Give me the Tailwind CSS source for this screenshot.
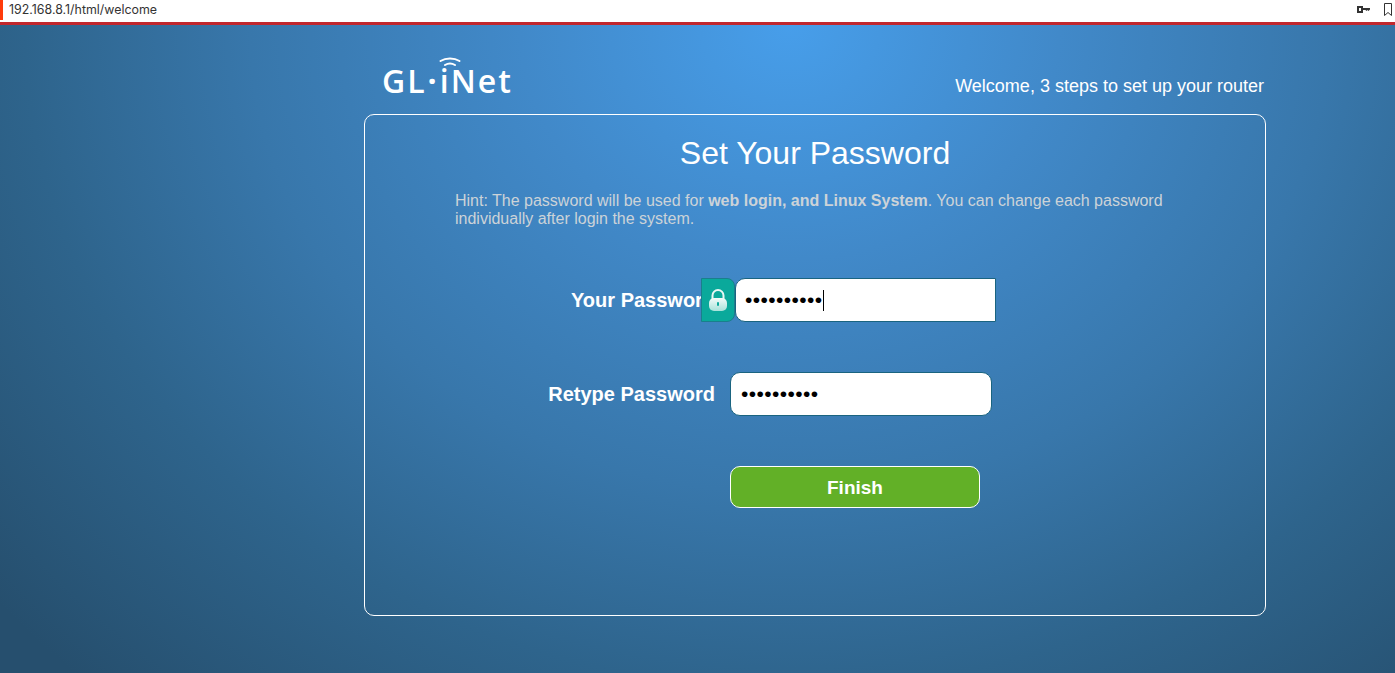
<!DOCTYPE html>
<html lang="en">
<head>
    <meta charset="UTF-8">
    <meta name="viewport" content="width=device-width, initial-scale=1.0">
    <title>GL.iNet Welcome</title>
    <script src="https://cdn.jsdelivr.net/npm/@tailwindcss/browser@4"></script>
</head>
<body class="h-[673px] overflow-hidden bg-white font-['Liberation_Sans',Arial,sans-serif]">
    <!-- Browser address bar -->
    <div class="h-[22px] flex items-center justify-between bg-white">
        <div class="flex items-center h-full">
            <div class="w-[3px] h-[20px] mb-[2px] bg-[#ff3b0a]"></div>
            <span class="ml-[6px] mb-[2px] text-[12.400px] text-[#333] font-['Inter',sans-serif]">192.168.8.1/html/welcome</span>
        </div>
        <div class="flex items-center gap-[14px] pr-[3px] mb-[3px]">
            <svg width="13" height="7" viewBox="0 0 13 7" fill="#333"><path d="M0 0h6v2h7v1.500l-1.500 1.500-1-1-1 1-1-1H6v3H0zM2 2v3h2V2z" fill-rule="evenodd"/></svg>
            <svg width="8" height="13" viewBox="0 0 8 13" fill="none" stroke="#333" stroke-width="1"><path d="M.5.500h7v12L4 9.500l-3.500 3z"/></svg>
        </div>
    </div>
    <div class="h-[3px] bg-[#c1272d]"></div>

    <main class="h-[648px] bg-[radial-gradient(ellipse_900px_780px_at_790px_0px,#479eea_0%,#4189c9_30%,#3877ab_60%,#2e648c_85%,#264f6e_115%)] pl-[364px]">
        <!-- Logo row -->
        <div class="w-[902px] h-[89px] flex justify-between">
            <div class="relative ml-[18px] mt-[39px] h-[34px] text-[32px] leading-[34px] font-semibold tracking-[2px] text-white font-['Open_Sans',sans-serif] whitespace-nowrap">
                GL<span class="mx-[1px] font-bold">·</span>iNet
                <svg class="absolute left-[57px] -top-[7px]" width="22" height="13" viewBox="0 0 22 13" fill="none" stroke="white" stroke-width="2" stroke-linecap="round">
                    <path d="M1.500 4C7 .5 15 .5 20.500 4"/>
                    <path d="M6 8C9 6.200 13 6.200 16 8"/>
                </svg>
            </div>
            <p class="mt-[50px] mr-[2px] text-[18px] leading-[22px] text-white">Welcome, 3 steps to set up your router</p>
        </div>

        <!-- Card -->
        <section class="w-[902px] h-[502px] border border-white rounded-[10px]">
            <h1 class="mt-[18px] text-center text-[32px] leading-[40px] text-white">Set Your Password</h1>
            <p class="mt-[19px] ml-[90px] w-[730px] text-[16px] leading-[18px] text-[#ccd3d8]">Hint: The password will be used for <b>web login, and Linux System</b>. You can change each password individually after login the system.</p>

            <div class="mt-[50px] flex items-stretch h-[44px]">
                <label class="w-[336px] pl-[206px] overflow-hidden whitespace-nowrap text-[20px] font-bold leading-[44px] text-white">Your Password</label>
                <div class="w-[34px] flex items-center justify-center bg-[#0aa99b] border border-[#1a7f8c] rounded-r-[8px]">
                    <svg width="20" height="24" viewBox="0 0 20 24">
                        <defs>
                            <linearGradient id="lockBody" x1="0" y1="0" x2="0" y2="1">
                                <stop offset="0" stop-color="#f2fbf9"/>
                                <stop offset="1" stop-color="#a8e2da"/>
                            </linearGradient>
                        </defs>
                        <path d="M4.500 11V7.500a5.500 5.500 0 0 1 11 0V11" fill="none" stroke="#e8f7f4" stroke-width="2"/>
                        <rect x="1" y="10" width="18" height="13" rx="5" fill="url(#lockBody)"/>
                        <rect x="9" y="14" width="2" height="4" rx="1" fill="#0aa99b"/>
                    </svg>
                </div>
                <div class="relative w-[261px] bg-white border border-[#1a6480] rounded-l-[10px]">
                    <input type="password" value="1234567890" class="w-full h-full pl-[9px] text-[21px] tracking-[0.400px] text-black outline-none bg-transparent">
                    <div class="absolute left-[87px] top-[11px] w-px h-[21px] bg-black"></div>
                </div>
            </div>

            <div class="mt-[50px] flex items-center h-[44px]">
                <label class="w-[350px] text-right whitespace-nowrap text-[20px] font-bold text-white">Retype Password</label>
                <input type="password" value="1234567890" class="ml-[15px] w-[262px] h-[44px] pl-[10px] text-[21px] tracking-[0.400px] text-black bg-white border border-[#1a6480] rounded-[10px] outline-none">
            </div>

            <div class="mt-[50px] pl-[365px]">
                <button class="w-[250px] h-[42px] pt-[2px] bg-[#62b027] border border-white rounded-[10px] text-[19px] font-bold text-white">Finish</button>
            </div>
        </section>
    </main>
</body>
</html>
